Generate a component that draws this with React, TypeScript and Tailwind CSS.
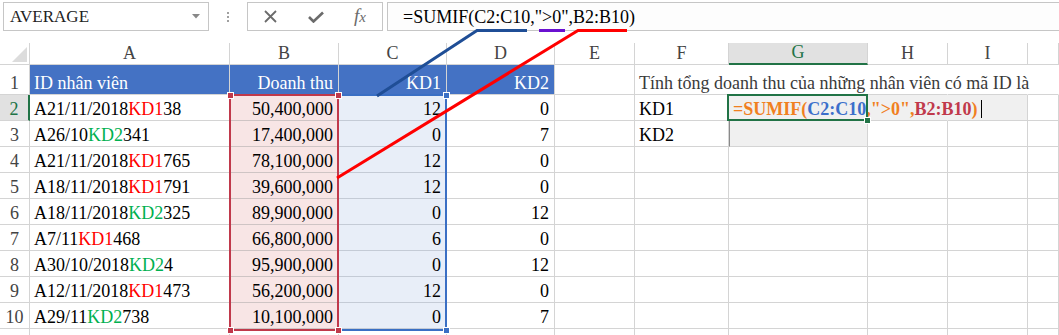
import React from "react";

const W = [
  "w-[200px]",
  "w-[109px]",
  "w-[108px]",
  "w-[108px]",
  "w-[80px]",
  "w-[94px]",
  "w-[139px]",
  "w-[80px]",
  "w-[80px]",
  "w-[31px]",
];

type Id = { pre: string; code: string; post: string; green: boolean };
const rows: { id: Id; rev: string; kd1: number; kd2: number }[] = [
  { id: { pre: "A21/11/2018", code: "KD1", post: "38", green: false }, rev: "50,400,000", kd1: 12, kd2: 0 },
  { id: { pre: "A26/10", code: "KD2", post: "341", green: true }, rev: "17,400,000", kd1: 0, kd2: 7 },
  { id: { pre: "A21/11/2018", code: "KD1", post: "765", green: false }, rev: "78,100,000", kd1: 12, kd2: 0 },
  { id: { pre: "A18/11/2018", code: "KD1", post: "791", green: false }, rev: "39,600,000", kd1: 12, kd2: 0 },
  { id: { pre: "A18/11/2018", code: "KD2", post: "325", green: true }, rev: "89,900,000", kd1: 0, kd2: 12 },
  { id: { pre: "A7/11", code: "KD1", post: "468", green: false }, rev: "66,800,000", kd1: 6, kd2: 0 },
  { id: { pre: "A30/10/2018", code: "KD2", post: "4", green: true }, rev: "95,900,000", kd1: 0, kd2: 12 },
  { id: { pre: "A12/11/2018", code: "KD1", post: "473", green: false }, rev: "56,200,000", kd1: 12, kd2: 0 },
  { id: { pre: "A29/11", code: "KD2", post: "738", green: true }, rev: "10,100,000", kd1: 0, kd2: 7 },
];

function Cell({
  i,
  className = "",
  children,
}: {
  i: number;
  className?: string;
  children?: React.ReactNode;
}) {
  return (
    <div
      className={`${W[i]} shrink-0 h-full border-r border-b border-[#d4d4d4] flex items-end ${className}`}
    >
      {children}
    </div>
  );
}

function RowHead({ n, active = false }: { n?: number; active?: boolean }) {
  return (
    <div
      className={`w-[30px] shrink-0 h-full border-b border-[#d4d4d4] flex items-end justify-center ${
        active
          ? "bg-[#e1e1e1] text-[#217346] border-r-2 border-r-[#217346]"
          : "text-[#444] border-r border-r-[#d4d4d4]"
      }`}
    >
      {n !== undefined && <span className="leading-[22px]">{n}</span>}
    </div>
  );
}

const T = "leading-[22px] whitespace-nowrap";

export default function App() {
  return (
    <div className="relative w-[1059px] h-[335px] overflow-hidden bg-white font-['Liberation_Serif',serif] text-[18px] text-black">
      {/* Top bar */}
      <div className="h-[43px] flex items-start pt-[2px]">
        <div className="ml-[3px] w-[206px] h-[29px] border border-[#c6c6c6] flex items-center pl-[6px] pr-[8px] text-[17px] text-[#222]">
          <span className="flex-1 leading-[26px]">AVERAGE</span>
          <svg width="8" height="5" viewBox="0 0 8 5">
            <path d="M0 0 L8 0 L4 4.5 Z" fill="#888" />
          </svg>
        </div>
        <div className="w-[38px] h-[29px] flex flex-col items-center justify-center gap-[2px]">
          <div className="w-[2px] h-[2px] bg-[#a0a0a0]" />
          <div className="w-[2px] h-[2px] bg-[#a0a0a0]" />
          <div className="w-[2px] h-[2px] bg-[#a0a0a0]" />
        </div>
        <div className="w-[136px] h-[29px] border border-[#c6c6c6] flex items-center">
          <div className="w-[45px] flex justify-center">
            <svg width="13" height="13" viewBox="0 0 13 13">
              <path d="M1 1 L12 12 M12 1 L1 12" stroke="#6b6b6b" strokeWidth="1.8" />
            </svg>
          </div>
          <div className="w-[45px] flex justify-center">
            <svg width="16" height="12" viewBox="0 0 16 12">
              <path d="M1 6 L5.5 10.5 L15 1.5" stroke="#6b6b6b" strokeWidth="2.6" fill="none" />
            </svg>
          </div>
          <div className="w-[44px] flex justify-center text-[#6b6b6b] italic text-[19px] leading-[26px]">
            <span>
              f<span className="text-[15px]">x</span>
            </span>
          </div>
        </div>
        <div className="ml-[4px] flex-1 h-[29px] border border-[#c6c6c6] border-r-0 bg-[#fdfdfd] flex items-center pl-[15px]">
          <span className="leading-[26px] whitespace-nowrap">=SUMIF(C2:C10,"&gt;0",B2:B10)</span>
        </div>
      </div>

      {/* Column headers */}
      <div className="h-[22px] flex text-[#444]">
        <div className="w-[30px] shrink-0 h-full border-r border-b border-[#d4d4d4] relative">
          <svg className="absolute left-[12px] top-[4px]" width="15" height="15" viewBox="0 0 15 15">
            <path d="M15 0 L15 15 L0 15 Z" fill="#dcdcdc" />
          </svg>
        </div>
        {["A", "B", "C", "D", "E", "F", "G", "H", "I", ""].map((c, i) =>
          c === "G" ? (
            <div
              key={i}
              className={`${W[i]} shrink-0 h-full border-r border-[#d4d4d4] border-b-2 border-b-[#217346] bg-[#e1e1e1] text-[#217346] flex items-end justify-center`}
            >
              <span className="leading-[21px]">{c}</span>
            </div>
          ) : (
            <div
              key={i}
              className={`${W[i]} shrink-0 h-full border-r border-b border-[#d4d4d4] flex items-end justify-center`}
            >
              <span className="leading-[22px]">{c}</span>
            </div>
          )
        )}
      </div>

      {/* Row 1 */}
      <div className="h-[30px] flex">
        <RowHead n={1} />
        <Cell i={0} className="bg-[#4472c4] border-[#4472c4] text-white pl-[4px]">
          <span className={T}>ID nhân viên</span>
        </Cell>
        <Cell i={1} className="bg-[#4472c4] border-[#4472c4] text-white justify-end pr-[5px]">
          <span className={T}>Doanh thu</span>
        </Cell>
        <Cell i={2} className="bg-[#4472c4] border-[#4472c4] text-white justify-end pr-[5px]">
          <span className={T}>KD1</span>
        </Cell>
        <Cell i={3} className="bg-[#4472c4] border-[#4472c4] text-white justify-end pr-[5px]">
          <span className={T}>KD2</span>
        </Cell>
        <Cell i={4} />
        <Cell i={5} className="border-r-transparent pl-[4px] relative z-10">
          <span className={`${T} text-[#3a3a3a]`}>
            Tính tổng doanh thu của những nhân viên có mã ID là
          </span>
        </Cell>
        <Cell i={6} className="border-r-transparent" />
        <Cell i={7} className="border-r-transparent" />
        <Cell i={8} className="border-r-transparent" />
        <Cell i={9} className="border-r-transparent" />
      </div>

      {/* Data rows */}
      {rows.map((r, idx) => {
        const n = idx + 2;
        return (
          <div key={n} className="h-[26px] flex">
            <RowHead n={n} active={n === 2} />
            <Cell i={0} className="pl-[4px]">
              <span className={T}>
                {r.id.pre}
                <span className={r.id.green ? "text-[#00b050]" : "text-[#ff0000]"}>{r.id.code}</span>
                {r.id.post}
              </span>
            </Cell>
            <Cell i={1} className="bg-[#f8e5e5] border-b-[#cfc4c4] justify-end pr-[5px]">
              <span className={T}>{r.rev}</span>
            </Cell>
            <Cell i={2} className="bg-[#e8eef8] border-b-[#c4cbd6] justify-end pr-[5px]">
              <span className={T}>{r.kd1}</span>
            </Cell>
            <Cell i={3} className="justify-end pr-[5px]">
              <span className={T}>{r.kd2}</span>
            </Cell>
            <Cell i={4} />
            <Cell i={5} className="pl-[4px]">
              <span className={T}>{n === 2 ? "KD1" : n === 3 ? "KD2" : ""}</span>
            </Cell>
            {n === 2 ? (
              <>
                <Cell i={6} className="bg-[#f0f0f0] border-r-[#f0f0f0] pl-[4px] relative z-10">
                  <span className={`${T} font-bold text-[#f0801f] flex items-end`}>
                    =SUMIF(<span className="text-[#3c6fcb]">C2:C10</span>,"&gt;0",
                    <span className="text-[#c0394b]">B2:B10</span>)
                    <span className="inline-block w-[1px] h-[18px] bg-black ml-[3px] mb-[2px]" />
                  </span>
                  <div className="absolute left-[-2px] top-[-1px] w-[141px] h-[27px] border-2 border-[#217346]" />
                  <div className="absolute right-[-4px] bottom-[-4px] w-[7px] h-[7px] bg-[#217346] border border-white" />
                </Cell>
                <Cell i={7} className="bg-[#f0f0f0] border-r-[#f0f0f0]" />
                <Cell i={8} className="bg-[#f0f0f0]" />
              </>
            ) : n === 3 ? (
              <>
                <Cell i={6} className="bg-[#f0f0f0] border-[#8a8a8a] border-l border-l-[#8a8a8a]" />
                <Cell i={7} />
                <Cell i={8} />
              </>
            ) : (
              <>
                <Cell i={6} />
                <Cell i={7} />
                <Cell i={8} />
              </>
            )}
            <Cell i={9} />
          </div>
        );
      })}

      {/* Row 11 partial (only its top edge is in view) */}
      <div className="h-[26px] flex">
        <RowHead />
        {W.map((_, i) => (
          <Cell key={i} i={i} />
        ))}
      </div>

      {/* Range highlight overlays */}
      <div className="absolute left-[337px] top-[94px] w-[110px] h-[237px] border-2 border-[#3a6fc4]" />
      <div className="absolute left-[229px] top-[94px] w-[110px] h-[237px] border-2 border-[#c0394b]" />
      <div className="absolute left-[443px] top-[92px] w-[7px] h-[7px] bg-[#3a6fc4] border border-white" />
      <div className="absolute left-[443px] top-[327px] w-[7px] h-[7px] bg-[#3a6fc4] border border-white" />
      <div className="absolute left-[227px] top-[92px] w-[7px] h-[7px] bg-[#c0394b] border border-white" />
      <div className="absolute left-[335px] top-[92px] w-[7px] h-[7px] bg-[#c0394b] border border-white" />
      <div className="absolute left-[227px] top-[327px] w-[7px] h-[7px] bg-[#c0394b] border border-white" />
      <div className="absolute left-[335px] top-[327px] w-[7px] h-[7px] bg-[#c0394b] border border-white" />

      {/* Annotation lines */}
      <svg className="absolute left-0 top-0 pointer-events-none" width="1059" height="335" viewBox="0 0 1059 335">
        <polyline points="527,30.5 477,30.5 377,96" fill="none" stroke="#1f4e96" strokeWidth="3" />
        <line x1="539" y1="30.5" x2="565" y2="30.5" stroke="#6a10d0" strokeWidth="3" />
        <polyline points="627,30.5 578,30.5 337,178" fill="none" stroke="#ff0000" strokeWidth="3" />
      </svg>
    </div>
  );
}
